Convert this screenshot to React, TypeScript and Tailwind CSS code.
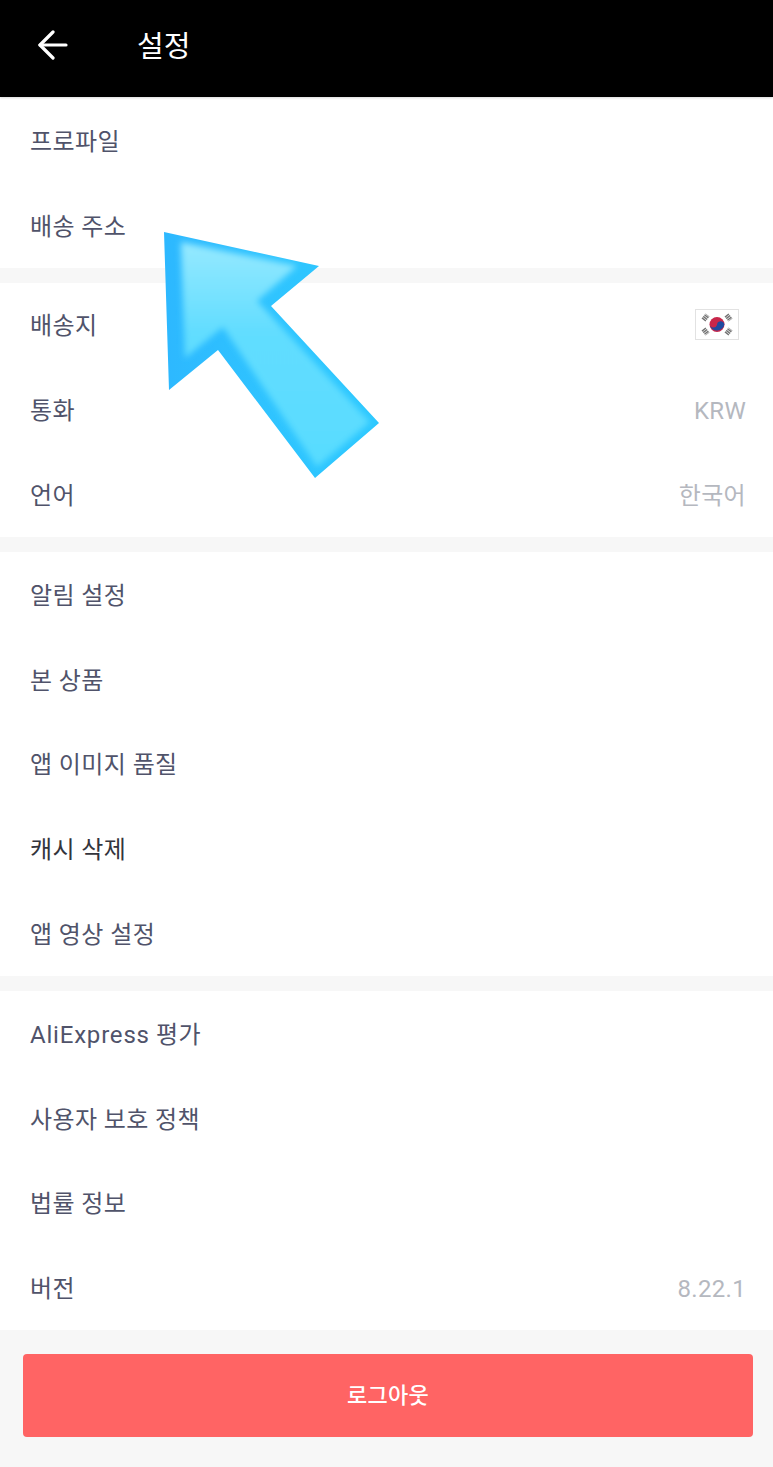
const font = { fontFamily: "Roboto, 'Noto Sans CJK KR', sans-serif" };

function Flag() {
  return (
    <svg width="44" height="31" viewBox="0 0 44 31" className="block">
      <rect x="0.5" y="0.5" width="43" height="30" fill="#fff" stroke="#e2e2e2" />
      <circle cx="22" cy="15.5" r="7.5" fill="#c8264a" />
      <path d="M14.6 14.6a3.8 3.8 0 0 0 7.4 1.3 3.8 3.8 0 0 1 7.4 -1a7.5 7.5 0 0 1 -14.8 .6z" fill="#1f4aa0" />
      <g stroke="#5a5a5a" strokeWidth="5" opacity="0.85">
        <path d="M8.5 11l4-5" strokeDasharray="1.4 .6" />
        <path d="M31.5 6l4 5" strokeDasharray="1.4 .6" />
        <path d="M8.5 20l4 5" strokeDasharray="1.4 .6" />
        <path d="M31.5 25l4-5" strokeDasharray="1.4 .6" />
      </g>
    </svg>
  );
}

function Row({ label, right, dark }: { label: React.ReactNode; right?: React.ReactNode; dark?: boolean }) {
  return (
    <div className="h-[84.8px] pt-[3px] flex items-center justify-between pl-[30px] pr-[27px]">
      <span className={`text-[24px] leading-none tracking-[0.4px] ${dark ? "text-[#33343c]" : "text-[#50536a]"}`}>{label}</span>
      {right && <span className="text-[24px] leading-none tracking-[0.3px] text-[#b5b8bf]">{right}</span>}
    </div>
  );
}

function Arrow() {
  return (
    <svg className="absolute left-[160px] top-[228px]" width="224" height="254" viewBox="160 228 224 254">
      <defs>
        <linearGradient id="edge" x1="0" y1="0" x2="1" y2="0">
          <stop offset="0" stopColor="#2db8ff" />
          <stop offset="0.5" stopColor="#2fc4ff" />
          <stop offset="1" stopColor="#2cc8ff" />
        </linearGradient>
        <linearGradient id="face" x1="0" y1="0" x2="0" y2="1">
          <stop offset="0" stopColor="#96e9ff" />
          <stop offset="0.4" stopColor="#62ddff" />
          <stop offset="1" stopColor="#58dcff" />
        </linearGradient>
        <filter id="soft" x="-10%" y="-10%" width="120%" height="120%">
          <feGaussianBlur stdDeviation="3" />
        </filter>
        <clipPath id="shape">
          <polygon points="164,232 319,266 271,306 379,423 315,478 218,350 169,390" />
        </clipPath>
      </defs>
      <polygon points="164,232 319,266 271,306 379,423 315,478 218,350 169,390" fill="url(#edge)" />
      <g clipPath="url(#shape)">
        <polygon points="181,242 297,266 257,301 370,422 317,467 223,327 185,358" fill="url(#face)" filter="url(#soft)" />
      </g>
    </svg>
  );
}

export default function App() {
  return (
    <div className="relative w-[773px] h-[1467px] bg-[#f7f7f7] overflow-hidden" style={font}>
      {/* Header */}
      <div className="h-[97px] bg-black flex items-center pb-[3px] shadow-[0_1px_2px_rgba(0,0,0,0.15)] relative">
        <svg className="ml-[38px] mb-[4px]" width="30" height="30" viewBox="0 0 30 30" fill="none" stroke="#fff" strokeWidth="3.2" strokeLinecap="round" strokeLinejoin="round">
          <path d="M2 15h26" />
          <path d="M15 2L2 15l13 13" />
        </svg>
        <h1 className="ml-[69px] text-[29px] leading-none text-white">설정</h1>
      </div>

      <div className="bg-white pt-px">
        <Row label="프로파일" />
        <Row label="배송 주소" />
      </div>

      <div className="bg-white mt-[15px]">
        <Row label="배송지" right={<span className="block mr-[7px] mb-[4px]"><Flag /></span>} />
        <Row label="통화" right="KRW" />
        <Row label="언어" right="한국어" />
      </div>

      <div className="bg-white mt-[15px]">
        <Row label="알림 설정" />
        <Row label="본 상품" />
        <Row label="앱 이미지 품질" />
        <Row label="캐시 삭제" dark />
        <Row label="앱 영상 설정" />
      </div>

      <div className="bg-white mt-[15px]">
        <Row label={<><span className="tracking-[0.8px]">AliExpress</span> 평가</>} />
        <Row label="사용자 보호 정책" />
        <Row label="법률 정보" />
        <Row label="버전" right="8.22.1" />
      </div>

      <div className="pl-[23px] pt-[24px]">
        <button className="w-[730px] h-[83px] rounded-[4px] bg-[#ff6464] text-white text-[22px] tracking-[0.3px] font-medium flex items-center justify-center">
          로그아웃
        </button>
      </div>

      <Arrow />
    </div>
  );
}
